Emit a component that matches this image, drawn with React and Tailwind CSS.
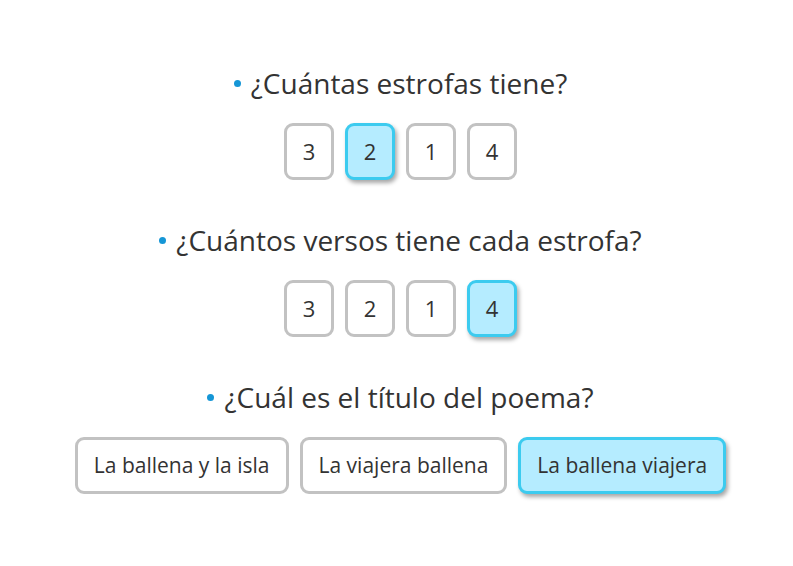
import React from "react";

const questions = [
  { q: "¿Cuántas estrofas tiene?", opts: ["3", "2", "1", "4"], sel: 1, wide: false },
  { q: "¿Cuántos versos tiene cada estrofa?", opts: ["3", "2", "1", "4"], sel: 3, wide: false },
  { q: "¿Cuál es el título del poema?", opts: ["La ballena y la isla", "La viajera ballena", "La ballena viajera"], sel: 2, wide: true },
];

export default function App() {
  return (
    <div
      className="w-[793px] h-[566px] bg-white flex flex-col items-center pt-[65px] pl-[8px] text-[#333333]"
      style={{ fontFamily: '"Open Sans", "Noto Sans", sans-serif' }}
    >
      {questions.map((item, i) => (
        <div key={i} className={"flex flex-col items-center " + (i > 0 ? "mt-[42px]" : "")}>
          <div className="flex items-center h-[36px]">
            <span className="w-[7px] h-[7px] rounded-full bg-[#1596d6] mr-[10px]" />
            <span className="text-[28px] leading-[36px]">{item.q}</span>
          </div>
          <div className="flex gap-[11px] mt-[22px]">
            {item.opts.map((o, j) => {
              const s = j === item.sel;
              return (
                <div
                  key={j}
                  className={
                    "h-[57px] flex items-center justify-center rounded-[9px] border-[3px] " +
                    (item.wide ? "px-[16px] text-[21px] " : "w-[50px] text-[22px] ") +
                    (s
                      ? "bg-[#b5ecff] border-[#3ccbef] shadow-[2px_3px_4px_rgba(0,0,0,0.35)]"
                      : "bg-white border-[#c2c2c2]")
                  }
                >
                  {o}
                </div>
              );
            })}
          </div>
        </div>
      ))}
    </div>
  );
}
